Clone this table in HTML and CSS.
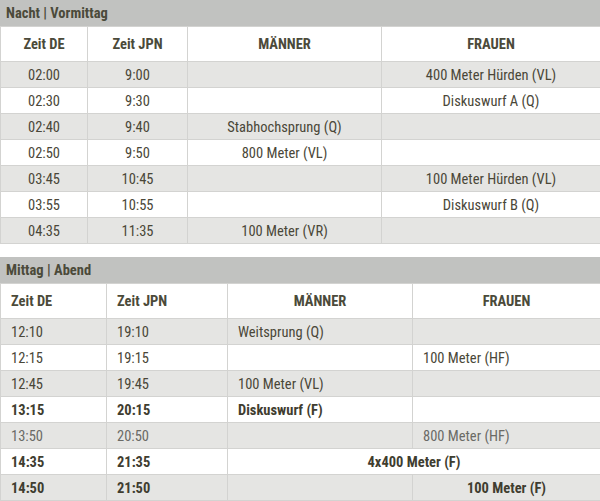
FILE: index.html
```html
<!DOCTYPE html>
<html lang="de">
<head>
<meta charset="utf-8">
<title>Zeitplan</title>
<link rel="stylesheet" href="styles.css">
</head>
<body>
<section class="block">
  <h2 class="section-title">Nacht | Vormittag</h2>
  <table class="schedule centered">
    <colgroup>
      <col class="c1a"><col class="c2a"><col class="c3a"><col class="c4a">
    </colgroup>
    <thead>
      <tr><th>Zeit DE</th><th>Zeit JPN</th><th>MÄNNER</th><th>FRAUEN</th></tr>
    </thead>
    <tbody>
      <tr><td>02:00</td><td>9:00</td><td></td><td>400 Meter Hürden (VL)</td></tr>
      <tr><td>02:30</td><td>9:30</td><td></td><td>Diskuswurf A (Q)</td></tr>
      <tr><td>02:40</td><td>9:40</td><td>Stabhochsprung (Q)</td><td></td></tr>
      <tr><td>02:50</td><td>9:50</td><td>800 Meter (VL)</td><td></td></tr>
      <tr><td>03:45</td><td>10:45</td><td></td><td>100 Meter Hürden (VL)</td></tr>
      <tr><td>03:55</td><td>10:55</td><td></td><td>Diskuswurf B (Q)</td></tr>
      <tr><td>04:35</td><td>11:35</td><td>100 Meter (VR)</td><td></td></tr>
    </tbody>
  </table>
</section>
<section class="block">
  <h2 class="section-title">Mittag | Abend</h2>
  <table class="schedule left">
    <colgroup>
      <col class="c1b"><col class="c2b"><col class="c3b"><col class="c4b">
    </colgroup>
    <thead>
      <tr><th>Zeit DE</th><th>Zeit JPN</th><th class="ctr">MÄNNER</th><th class="ctr">FRAUEN</th></tr>
    </thead>
    <tbody>
      <tr><td>12:10</td><td>19:10</td><td>Weitsprung (Q)</td><td></td></tr>
      <tr><td>12:15</td><td>19:15</td><td></td><td>100 Meter (HF)</td></tr>
      <tr><td>12:45</td><td>19:45</td><td>100 Meter (VL)</td><td></td></tr>
      <tr class="final"><td>13:15</td><td>20:15</td><td>Diskuswurf (F)</td><td></td></tr>
      <tr class="light"><td>13:50</td><td>20:50</td><td></td><td>800 Meter (HF)</td></tr>
      <tr class="final"><td>14:35</td><td>21:35</td><td colspan="2" class="ctr">4x400 Meter (F)</td></tr>
      <tr class="final"><td>14:50</td><td>21:50</td><td></td><td class="ctr">100 Meter (F)</td></tr>
    </tbody>
  </table>
</section>
</body>
</html>
```
FILE: styles.css
```css
html, body {
  margin: 0;
  padding: 0;
  background: #ffffff;
}
body {
  font-family: "Roboto Condensed", "Liberation Sans Narrow", Roboto, sans-serif;
  font-stretch: condensed;
  font-size: 14.5px;
  color: #4a4738;
  width: 600px;
}
.block {
  margin: 0 0 13px 0;
}
.section-title {
  margin: 0;
  height: 26px;
  line-height: 27px;
  padding: 0 6px;
  background: #c1c2c0;
  font-size: 14.5px;
  font-weight: 700;
  color: #4b4a3a;
}
.schedule {
  width: 600px;
  border-collapse: collapse;
  table-layout: fixed;
}
.schedule th,
.schedule td {
  border: 1px solid #d3d3d1;
  padding: 1px 10px 0;
  white-space: nowrap;
}
.schedule th {
  height: 33px;
  font-weight: 700;
  background: #ffffff;
  color: #4b4a3a;
}
.schedule td {
  height: 24px;
}
.schedule tbody tr:nth-child(odd) td {
  background: #e5e5e3;
}
.schedule tbody tr:nth-child(even) td {
  background: #ffffff;
}
.centered th, .centered td { text-align: center; }
.left th, .left td { text-align: left; }
.left .ctr { text-align: center; }
.final td { font-weight: 700; color: #3f3d30; }
.light td { color: #6a6a66; }
.c1a { width: 87px; }
.c2a { width: 100px; }
.c3a { width: 194px; }
.c4a { width: 219px; }
.c1b { width: 106px; }
.c2b { width: 121px; }
.c3b { width: 185px; }
.c4b { width: 188px; }
```
